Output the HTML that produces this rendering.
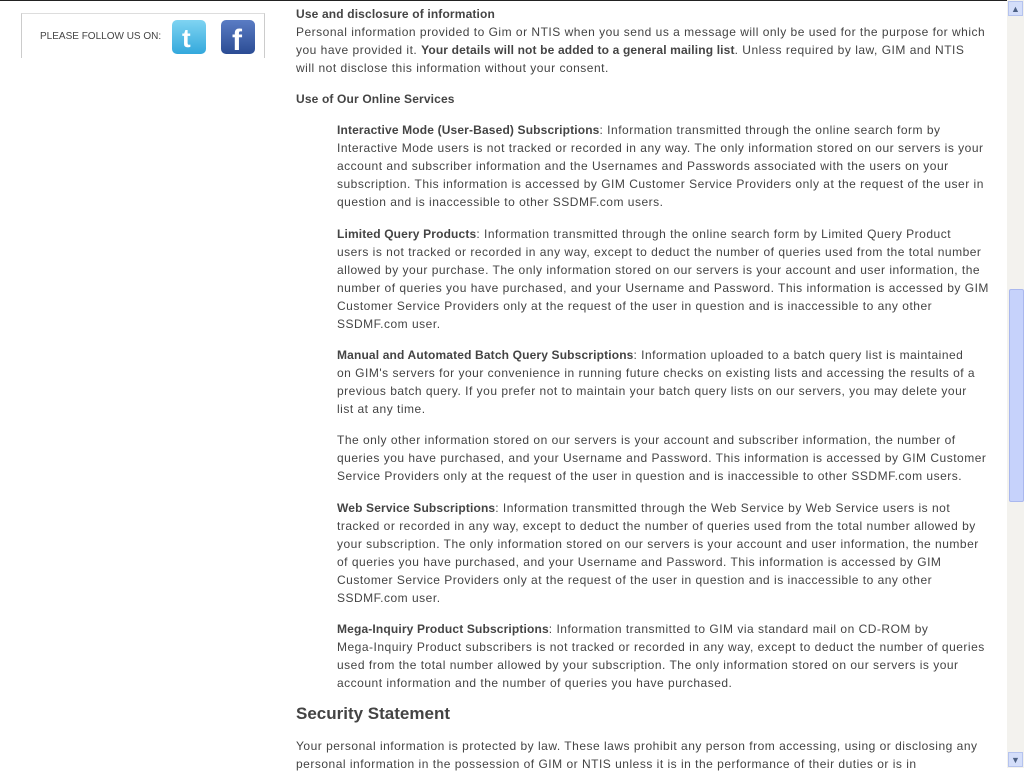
<!DOCTYPE html>
<html><head><meta charset="utf-8"><style>
body{margin:0;width:1024px;height:768px;overflow:hidden;background:#fff;font-family:"Liberation Sans",sans-serif;color:#444;font-size:12px;position:relative}
.top{position:absolute;left:0;top:0;width:1007px;height:1px;background:#222}
.box{position:absolute;left:21px;top:13px;width:242px;height:44px;border:1px solid #ccc;border-bottom:none;border-top-color:#ddd}
.follow{position:absolute;left:40px;top:31px;font-size:10px;color:#444}
.tw{position:absolute;left:172px;top:20px;width:34px;height:34px;border-radius:5px;background:linear-gradient(#7fd4f2,#33a8dc);}
.fb{position:absolute;left:221px;top:20px;width:34px;height:34px;border-radius:5px;background:linear-gradient(#5a7cc4,#2b4c94);}
.tw span,.fb span{position:absolute;color:#fff;font-weight:bold;font-family:"Liberation Sans",sans-serif}
.l{position:absolute;white-space:nowrap;line-height:18px;letter-spacing:0.5px}
b{color:#444;letter-spacing:0.15px}
.h{font-weight:bold;letter-spacing:0.15px}
.sec{position:absolute;left:296px;top:704px;font-size:17px;font-weight:bold;color:#444}
.sb{position:absolute;left:1007px;top:0;width:17px;height:768px;background:#f3f2ee}
.thumb{position:absolute;left:1009px;top:289px;width:13px;height:211px;background:#c6d2fb;border:1px solid #aab8ee;border-radius:2px}
.arr{position:absolute;left:1008px;width:15px;height:15px;background:#d4defa;border:1px solid #b5c3ee;color:#4d6185;font-size:9px;text-align:center;line-height:15px;box-sizing:border-box}
</style></head><body>
<div class="top"></div>
<div class="box"></div>
<div class="follow">PLEASE FOLLOW US ON:</div>
<div class="tw"><span style="left:10px;top:3px;font-size:26px">t</span></div>
<div class="fb"><span style="left:11px;top:4px;font-size:30px">f</span></div>

<div class="l h" style="left:296px;top:5px">Use and disclosure of information</div>
<div class="l" style="left:296px;top:23px">Personal information provided to Gim or NTIS when you send us a message will only be used for the purpose for which</div>
<div class="l" style="left:296px;top:41px">you have provided it. <b>Your details will not be added to a general mailing list</b>. Unless required by law, GIM and NTIS</div>
<div class="l" style="left:296px;top:59px">will not disclose this information without your consent.</div>
<div class="l h" style="left:296px;top:90px">Use of Our Online Services</div>

<div class="l" style="left:337px;top:121px"><b>Interactive Mode (User-Based) Subscriptions</b>: Information transmitted through the online search form by</div>
<div class="l" style="left:337px;top:139px">Interactive Mode users is not tracked or recorded in any way. The only information stored on our servers is your</div>
<div class="l" style="left:337px;top:157px">account and subscriber information and the Usernames and Passwords associated with the users on your</div>
<div class="l" style="left:337px;top:175px">subscription. This information is accessed by GIM Customer Service Providers only at the request of the user in</div>
<div class="l" style="left:337px;top:193px">question and is inaccessible to other SSDMF.com users.</div>

<div class="l" style="left:337px;top:225px"><b>Limited Query Products</b>: Information transmitted through the online search form by Limited Query Product</div>
<div class="l" style="left:337px;top:243px">users is not tracked or recorded in any way, except to deduct the number of queries used from the total number</div>
<div class="l" style="left:337px;top:261px">allowed by your purchase. The only information stored on our servers is your account and user information, the</div>
<div class="l" style="left:337px;top:279px">number of queries you have purchased, and your Username and Password. This information is accessed by GIM</div>
<div class="l" style="left:337px;top:297px">Customer Service Providers only at the request of the user in question and is inaccessible to any other</div>
<div class="l" style="left:337px;top:315px">SSDMF.com user.</div>

<div class="l" style="left:337px;top:346px"><b>Manual and Automated Batch Query Subscriptions</b>: Information uploaded to a batch query list is maintained</div>
<div class="l" style="left:337px;top:364px">on GIM's servers for your convenience in running future checks on existing lists and accessing the results of a</div>
<div class="l" style="left:337px;top:382px">previous batch query. If you prefer not to maintain your batch query lists on our servers, you may delete your</div>
<div class="l" style="left:337px;top:400px">list at any time.</div>

<div class="l" style="left:337px;top:431px">The only other information stored on our servers is your account and subscriber information, the number of</div>
<div class="l" style="left:337px;top:449px">queries you have purchased, and your Username and Password. This information is accessed by GIM Customer</div>
<div class="l" style="left:337px;top:467px">Service Providers only at the request of the user in question and is inaccessible to other SSDMF.com users.</div>

<div class="l" style="left:337px;top:499px"><b>Web Service Subscriptions</b>: Information transmitted through the Web Service by Web Service users is not</div>
<div class="l" style="left:337px;top:517px">tracked or recorded in any way, except to deduct the number of queries used from the total number allowed by</div>
<div class="l" style="left:337px;top:535px">your subscription. The only information stored on our servers is your account and user information, the number</div>
<div class="l" style="left:337px;top:553px">of queries you have purchased, and your Username and Password. This information is accessed by GIM</div>
<div class="l" style="left:337px;top:571px">Customer Service Providers only at the request of the user in question and is inaccessible to any other</div>
<div class="l" style="left:337px;top:589px">SSDMF.com user.</div>

<div class="l" style="left:337px;top:620px"><b>Mega-Inquiry Product Subscriptions</b>: Information transmitted to GIM via standard mail on CD-ROM by</div>
<div class="l" style="left:337px;top:638px">Mega-Inquiry Product subscribers is not tracked or recorded in any way, except to deduct the number of queries</div>
<div class="l" style="left:337px;top:656px">used from the total number allowed by your subscription. The only information stored on our servers is your</div>
<div class="l" style="left:337px;top:674px">account information and the number of queries you have purchased.</div>

<div class="sec">Security Statement</div>
<div class="l" style="left:296px;top:737px">Your personal information is protected by law. These laws prohibit any person from accessing, using or disclosing any</div>
<div class="l" style="left:296px;top:755px">personal information in the possession of GIM or NTIS unless it is in the performance of their duties or is in</div>

<div class="sb"></div>
<div class="thumb"></div>
<div class="arr" style="top:1px">&#9650;</div>
<div class="arr" style="top:752px">&#9660;</div>
</body></html>
